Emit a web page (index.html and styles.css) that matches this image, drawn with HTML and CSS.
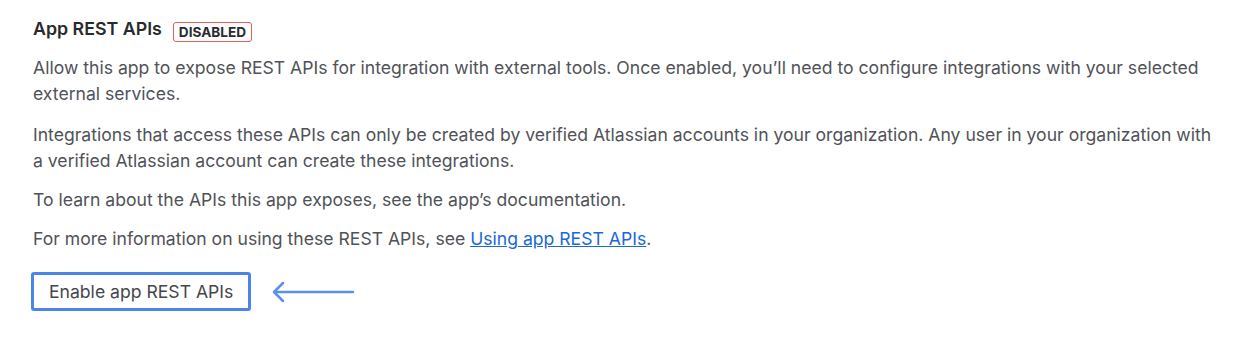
FILE: index.html
```html
<!DOCTYPE html>
<html>
<head>
<meta charset="utf-8">
<link rel="stylesheet" href="styles.css">
</head>
<body>
<section class="panel">
  <div class="heading">
    <h2 class="title">App REST APIs</h2>
    <span class="badge">Disabled</span>
  </div>
  <p class="text first">Allow this app to expose REST APIs for integration with external tools. Once enabled, you’ll need to configure integrations with your selected external services.</p>
  <p class="text">Integrations that access these APIs can only be created by verified Atlassian accounts in your organization. Any user in your organization with a verified Atlassian account can create these integrations.</p>
  <p class="text">To learn about the APIs this app exposes, see the app’s documentation.</p>
  <p class="text">For more information on using these REST APIs, see <a class="link" href="#">Using app REST APIs</a>.</p>
  <div class="actions">
    <button class="btn">Enable app REST APIs</button>
    <svg class="arrow" width="84" height="22" viewBox="0 0 84 22"><path d="M82 11H3M12 2L3 11l9 9" fill="none" stroke="#5b8ff0" stroke-width="2.5" stroke-linecap="round" stroke-linejoin="round"/></svg>
  </div>
</section>
</body>
</html>
```

FILE: styles.css
```css
html, body { margin: 0; padding: 0; background: #fff; }
body { font-family: Inter, "Noto Sans", sans-serif; color: #505258; }
.panel { padding: 16px 33px 0 33px; width: 1180px; }
.heading { display: flex; align-items: center; gap: 11px; height: 26px; }
.title { margin: 0; font-size: 17.8px; font-weight: 600; color: #292a2e; line-height: 26px; }
.badge { margin-top: 5px; font-size: 13.6px; font-weight: 700; text-transform: uppercase; color: #292a2e; border: 1px solid #f15b50; border-radius: 3px; padding: 0 5px; line-height: 18px; }
.text { margin: 0 0 13px; font-size: 17.6px; line-height: 26px; }
.text.first { margin-top: 13px; margin-bottom: 15px; }
.link { color: #1868db; text-decoration: underline; }
.actions { display: flex; align-items: center; gap: 20px; margin-top: 20px; margin-left: -2px; }
.btn { font-family: Inter, "Noto Sans", sans-serif; font-size: 17.6px; color: #44464d; background: #fff; border: 3px solid #4a86e8; border-radius: 3px; height: 39px; padding: 0 15px; line-height: 31px; }
.arrow { display: block; }
```
